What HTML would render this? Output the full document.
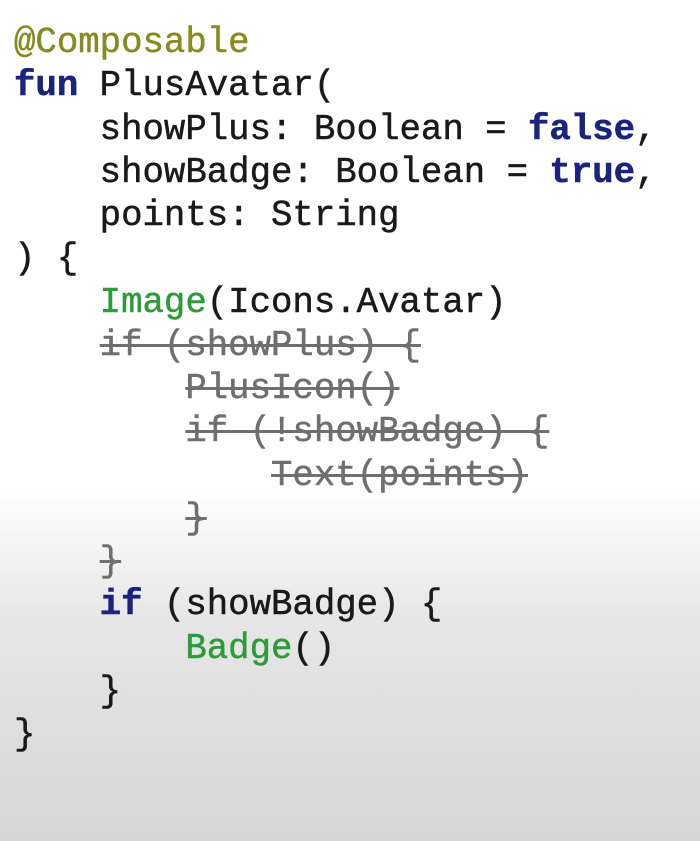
<!DOCTYPE html>
<html><head><style>
html,body{margin:0;padding:0}
body{width:700px;height:841px;overflow:hidden;background:linear-gradient(to bottom,#fff 0,#fff 490px,#e6e6e6 620px,#d6d6d6 841px);}
pre{margin:0;padding:21px 0 0 14px;font-family:"Liberation Mono",monospace;font-size:35.7px;line-height:43.25px;color:#1a1a1a;-webkit-text-stroke:0.5px currentColor;}
.a{color:#8a8a22}.k{color:#1a237e;font-weight:bold}.g{color:#2e9a3a}
.s{color:#6f6f6f;text-decoration:line-through;text-decoration-thickness:2.5px}
</style></head><body><pre><span class="a">@Composable</span>
<span class="k">fun</span> PlusAvatar(
    showPlus: Boolean = <span class="k">false</span>,
    showBadge: Boolean = <span class="k">true</span>,
    points: String
) {
    <span class="g">Image</span>(Icons.Avatar)
    <span class="s">if (showPlus) {</span>
        <span class="s">PlusIcon()</span>
        <span class="s">if (!showBadge) {</span>
            <span class="s">Text(points)</span>
        <span class="s">}</span>
    <span class="s">}</span>
    <span class="k">if</span> (showBadge) {
        <span class="g">Badge</span>()
    }
}</pre></body></html>
